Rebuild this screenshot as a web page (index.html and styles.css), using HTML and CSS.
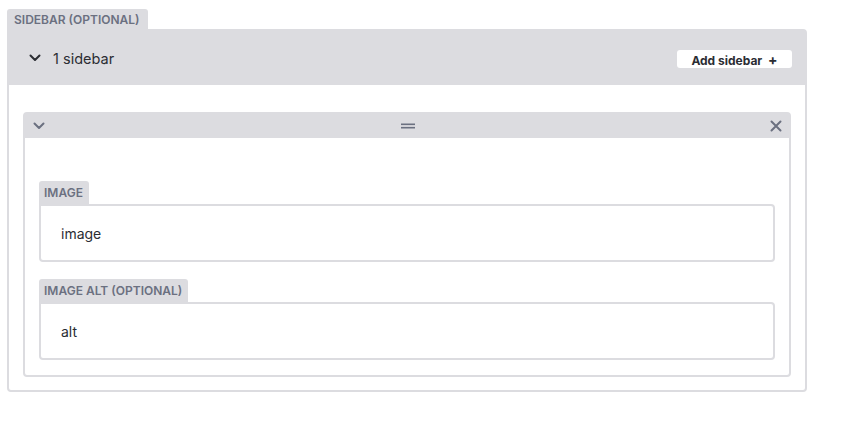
FILE: index.html
```html
<!DOCTYPE html>
<html>
<head>
<meta charset="utf-8">
<link rel="stylesheet" href="styles.css">
</head>
<body>
<div class="field">
  <div class="tab">SIDEBAR (OPTIONAL)</div>
  <div class="outer">
    <div class="outer-head">
      <div class="toggle">
        <svg class="chev" width="12" height="8" viewBox="0 0 12 8"><path d="M1.5 1.5 L6 6 L10.5 1.5" fill="none" stroke="#2b2d33" stroke-width="2" stroke-linecap="round" stroke-linejoin="round"/></svg>
        <span>1 sidebar</span>
      </div>
      <button class="add">Add sidebar <span class="plus">+</span></button>
    </div>
    <div class="outer-body">
      <div class="item">
        <div class="item-head">
          <svg width="12" height="8" viewBox="0 0 12 8"><path d="M1.5 1.5 L6 6 L10.5 1.5" fill="none" stroke="#6b7080" stroke-width="2" stroke-linecap="round" stroke-linejoin="round"/></svg>
          <svg width="14" height="6" viewBox="0 0 14 6"><rect x="0" y="0.5" width="14" height="1.6" fill="#6b7080"/><rect x="0" y="3.9" width="14" height="1.6" fill="#6b7080"/></svg>
          <svg width="12" height="12" viewBox="0 0 12 12"><path d="M1.5 1.5 L10.5 10.5 M10.5 1.5 L1.5 10.5" fill="none" stroke="#6b7080" stroke-width="2" stroke-linecap="round"/></svg>
        </div>
        <div class="item-body">
          <div class="sub">
            <div class="tab small">IMAGE</div>
            <div class="input">image</div>
          </div>
          <div class="sub">
            <div class="tab small">IMAGE ALT (OPTIONAL)</div>
            <div class="input">alt</div>
          </div>
        </div>
      </div>
    </div>
  </div>
</div>
</body>
</html>
```
FILE: styles.css
```css
* { box-sizing: border-box; }
body {
  margin: 0;
  padding: 9px 7px;
  background: #fff;
  font-family: Inter, "Noto Sans", "Liberation Sans", sans-serif;
  color: #2b2d33;
}
.field { width: 800px; }
.tab {
  display: inline-block;
  height: 20px;
  line-height: 21px;
  padding: 0 8px 0 7px;
  background: #dcdce0;
  color: #6b7080;
  font-size: 12px;
  font-weight: 600;
  border-radius: 3px 3px 0 0;
  vertical-align: top;
}
.tab.small { height: 23px; line-height: 24px; padding: 0 6px 0 5px; }
.outer {
  border: 2px solid #dcdce0;
  border-radius: 0 4px 4px 4px;
}
.outer-head {
  background: #dcdce0;
  height: 54px;
  display: flex;
  align-items: center;
  justify-content: space-between;
  padding: 0 13px 0 20px;
}
.toggle { display: flex; align-items: center; gap: 12px; font-size: 14.5px; }
.add {
  border: 0;
  background: #fff;
  border-radius: 3px;
  height: 18px;
  width: 115px;
  padding: 0;
  font-family: inherit;
  font-size: 12px;
  font-weight: 700;
  color: #2b2d33;
  margin-top: 2px;
}
.plus { font-size: 14px; margin-left: 3px; }
.outer-body { padding: 27px 14px 13px 14px; }
.item {
  border: 2px solid #dcdce0;
  border-radius: 4px;
}
.item-head {
  background: #dcdce0;
  height: 24px;
  display: flex;
  align-items: center;
  justify-content: space-between;
  padding: 0 7px 0 8px;
}
.item-body {
  padding: 43px 14px 15px 14px;
  display: flex;
  flex-direction: column;
  gap: 17px;
}
.input {
  border: 2px solid #dcdce0;
  border-radius: 0 4px 4px 4px;
  height: 58px;
  display: flex;
  align-items: center;
  padding-left: 20px;
  font-size: 14px;
  color: #2b2d33;
}
```
